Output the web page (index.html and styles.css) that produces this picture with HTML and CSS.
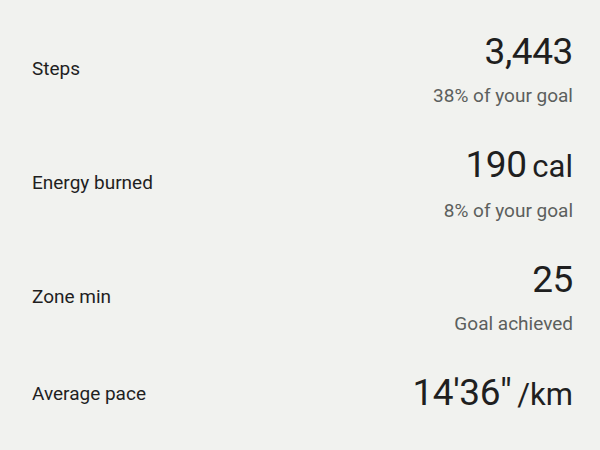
FILE: index.html
```html
<!DOCTYPE html>
<html>
<head>
<meta charset="utf-8">
<link rel="stylesheet" href="styles.css">
</head>
<body>
<div class="list">
  <div class="row">
    <div class="label">Steps</div>
    <div class="stat">
      <div class="value">3,443</div>
      <div class="sub">38% of your goal</div>
    </div>
  </div>
  <div class="row">
    <div class="label">Energy burned</div>
    <div class="stat">
      <div class="value">190 <span class="unit">cal</span></div>
      <div class="sub">8% of your goal</div>
    </div>
  </div>
  <div class="row">
    <div class="label">Zone min</div>
    <div class="stat">
      <div class="value">25</div>
      <div class="sub">Goal achieved</div>
    </div>
  </div>
  <div class="row">
    <div class="label">Average pace</div>
    <div class="stat">
      <div class="value">14'36" <span class="unit">/km</span></div>
    </div>
  </div>
</div>
</body>
</html>
```
FILE: styles.css
```css
html, body {
  margin: 0;
  padding: 0;
  background: #f1f2ef;
}
body {
  font-family: Roboto, "Liberation Sans", sans-serif;
  color: #1f1f1f;
  width: 600px;
  height: 450px;
  overflow: hidden;
}
.list {
  display: flex;
  flex-direction: column;
  gap: 35px;
  padding: 30px 27px 0 32px;
}
.row {
  display: flex;
  align-items: center;
  justify-content: space-between;
}
.label {
  font-size: 19px;
  line-height: 24px;
}
.stat {
  display: flex;
  flex-direction: column;
  align-items: flex-end;
}
.value {
  font-size: 37px;
  line-height: 44px;
  letter-spacing: -0.4px;
  word-spacing: -3px;
}
.unit {
  font-size: 31px;
  letter-spacing: 0;
}
.sub {
  font-size: 19px;
  line-height: 24px;
  color: #5c5f5d;
  margin-top: 10px;
}
```
